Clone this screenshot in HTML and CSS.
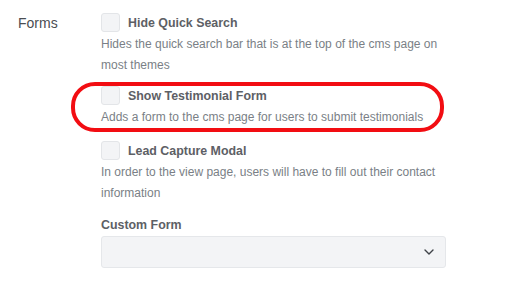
FILE: index.html
```html
<!DOCTYPE html>
<html>
<head>
<meta charset="utf-8">
<link rel="stylesheet" href="styles.css">
</head>
<body>
<div class="section">
  <div class="section-title">Forms</div>
  <div class="fields">
    <div class="field">
      <label class="check-row"><span class="checkbox"></span><span class="check-label">Hide Quick Search</span></label>
      <p class="help">Hides the quick search bar that is at the top of the cms page on most themes</p>
    </div>
    <div class="field field-highlight">
      <label class="check-row"><span class="checkbox"></span><span class="check-label">Show Testimonial Form</span></label>
      <p class="help">Adds a form to the cms page for users to submit testimonials</p>
      <span class="annotation"></span>
    </div>
    <div class="field field-after-highlight">
      <label class="check-row"><span class="checkbox"></span><span class="check-label">Lead Capture Modal</span></label>
      <p class="help">In order to the view page, users will have to fill out their contact information</p>
    </div>
    <div class="field field-select">
      <div class="select-label">Custom Form</div>
      <div class="select">
        <svg class="chevron" width="10" height="6" viewBox="0 0 10 6"><path d="M1 1 L5 5 L9 1" fill="none" stroke="#3f4348" stroke-width="1.4" stroke-linecap="round" stroke-linejoin="round"/></svg>
      </div>
    </div>
  </div>
</div>
</body>
</html>
```

FILE: styles.css
```css
html, body {
  margin: 0;
  padding: 0;
  background: #ffffff;
}
body {
  font-family: "Liberation Sans", Arial, sans-serif;
  color: #4a4d52;
}
.section {
  display: flex;
  padding: 13px 0 0 18px;
}
.section-title {
  width: 83px;
  flex: none;
  font-size: 14px;
  line-height: 20px;
  color: #4a4d52;
}
.fields {
  width: 345px;
  display: flex;
  flex-direction: column;
}
.field {
  position: relative;
  margin-top: 10px;
}
.field:first-child {
  margin-top: 0;
}
.field-after-highlight {
  margin-top: 13px;
}
.check-row {
  display: flex;
  align-items: center;
  height: 19px;
}
.checkbox {
  width: 17px;
  height: 17px;
  border: 1px solid #e3e5e8;
  border-radius: 3px;
  background: #f3f4f6;
  flex: none;
}
.check-label {
  margin-left: 8px;
  font-size: 12.4px;
  font-weight: 700;
  color: #5d6065;
}
.help {
  margin: 2px 0 0 0;
  font-size: 12px;
  line-height: 21px;
  color: #7a7f86;
}
.annotation {
  position: absolute;
  left: -30px;
  top: -4px;
  width: 365px;
  height: 42px;
  border: 4px solid #f20d12;
  border-radius: 24px;
  pointer-events: none;
}
.field-select {
  margin-top: 11px;
}
.select-label {
  font-size: 12.4px;
  font-weight: 700;
  line-height: 20px;
  color: #5d6065;
}
.select {
  margin-top: 1px;
  height: 30px;
  border: 1px solid #e5e7ea;
  border-radius: 3px;
  background: #f3f4f6;
  display: flex;
  align-items: center;
  justify-content: flex-end;
  padding-right: 11px;
}
```
